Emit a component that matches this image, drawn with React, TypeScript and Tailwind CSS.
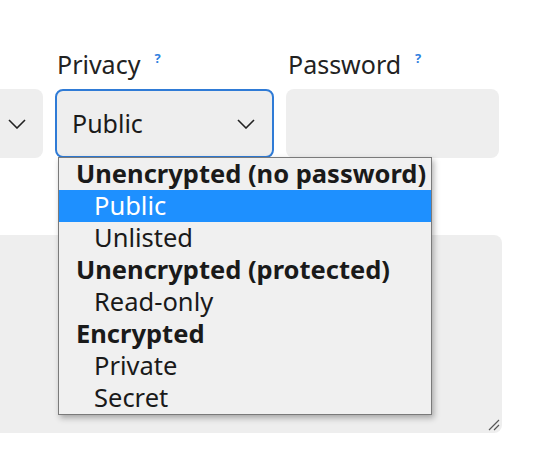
import { ReactNode } from "react";

const font = { fontFamily: '"Noto Sans", "Open Sans", sans-serif' };

function Chevron() {
  return (
    <svg width="18" height="10" viewBox="0 0 18 10" fill="none">
      <path d="M1 1l8 8 8-8" stroke="#222" strokeWidth="1.6" />
    </svg>
  );
}

function Label({ children }: { children?: ReactNode }) {
  return (
    <div className="h-[34px] mb-[8px] pl-[2px] flex items-start text-[25px] leading-[34px] text-[#222]">
      {children}
    </div>
  );
}

function Help() {
  return <span className="ml-[14px] text-[13px] leading-[16px] font-bold text-[#2f7fe0] mt-[3px]">?</span>;
}

type Row = { text: string; group?: boolean; active?: boolean };

const rows: Row[] = [
  { text: "Unencrypted (no password)", group: true },
  { text: "Public", active: true },
  { text: "Unlisted" },
  { text: "Unencrypted (protected)", group: true },
  { text: "Read-only" },
  { text: "Encrypted", group: true },
  { text: "Private" },
  { text: "Secret" },
];

export default function App() {
  return (
    <div className="relative w-[534px] h-[459px] overflow-hidden bg-white" style={font}>
      <div className="pt-[47px] ml-[-170px] flex gap-3">
        <div className="w-[213px]">
          <Label />
          <div className="h-[69px] rounded-[8px] border-2 border-transparent bg-[#eeeeee] flex items-center justify-end pr-[15px]">
            <Chevron />
          </div>
        </div>
        <div className="w-[219px]">
          <Label>
            Privacy <Help />
          </Label>
          <div className="h-[69px] rounded-[8px] border-2 border-[#2f7bd6] bg-[#eeeeee] flex items-center justify-between pl-[15px] pr-[17px]">
            <span className="text-[25px] text-[#1a1a1a]">Public</span>
            <Chevron />
          </div>
        </div>
        <div className="w-[213px]">
          <Label>
            Password <Help />
          </Label>
          <div className="h-[69px] rounded-[8px] border-2 border-transparent bg-[#eeeeee]" />
        </div>
      </div>

      <div className="relative ml-[-170px] mt-[77px] w-[672px] h-[198px] rounded-[8px] bg-[#eeeeee]">
        <svg className="absolute right-[2px] bottom-[2px]" width="12" height="12" viewBox="0 0 12 12">
          <path d="M1 11L11 1M6 11l5-5" stroke="#555" strokeWidth="1.2" />
        </svg>
      </div>

      <div className="absolute left-[58px] top-[157px] w-[374px] border border-[#7a7a7a] bg-[#f0f0f0] shadow-[2px_3px_6px_rgba(0,0,0,0.3)]">
        {rows.map((r) => (
          <div
            key={r.text}
            className={
              "h-[32px] leading-[30px] pb-[2px] text-[25.5px] whitespace-nowrap " +
              (r.group ? "pl-[17px] font-bold text-[#1a1a1a]" : "pl-[35px] text-[#1a1a1a]") +
              (r.active ? " bg-[#1e90ff] text-white" : "")
            }
          >
            {r.text}
          </div>
        ))}
      </div>
    </div>
  );
}
